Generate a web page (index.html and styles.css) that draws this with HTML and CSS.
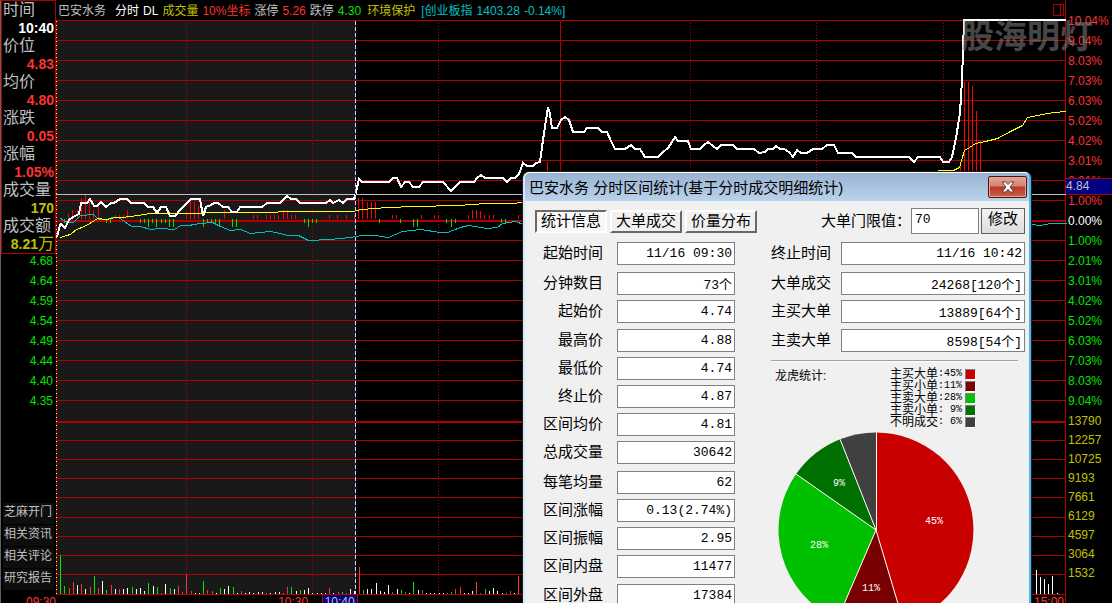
FILE: index.html
```html
<!DOCTYPE html>
<html lang="zh-CN">
<head>
<meta charset="utf-8">
<title>巴安水务 分时</title>
<link rel="stylesheet" href="styles.css">
</head>
<body>
<main class="terminal">
  <aside class="side">
    <dl class="quote">
      <dt>时间</dt><dd class="white">10:40</dd>
      <dt>价位</dt><dd class="up">4.83</dd>
      <dt>均价</dt><dd class="up">4.80</dd>
      <dt>涨跌</dt><dd class="up">0.05</dd>
      <dt>涨幅</dt><dd class="up">1.05%</dd>
      <dt>成交量</dt><dd class="amount">170</dd>
      <dt>成交额</dt><dd class="amount">8.21<span class="unit">万</span></dd>
    </dl>
    <ul class="scale prices down">
      <li>4.68</li><li>4.64</li><li>4.59</li><li>4.54</li><li>4.49</li><li>4.44</li><li>4.40</li><li>4.35</li>
    </ul>
    <nav class="links">
      <button type="button">芝麻开门</button>
      <button type="button">相关资讯</button>
      <button type="button">相关评论</button>
      <button type="button">研究报告</button>
    </nav>
  </aside>

  <section class="chart">
    <header class="head">
      <span class="name">巴安水务</span>
      <span class="white">分时</span>
      <span class="white">DL</span>
      <span class="amount">成交量</span>
      <span class="up">10%坐标</span>
      <span>涨停</span>
      <span class="up">5.26</span>
      <span>跌停</span>
      <span class="down">4.30</span>
      <span class="amount sector">环境保护</span>
      <span class="index sector">[创业板指</span>
      <span class="index">1403.28</span>
      <span class="index">-0.14%]</span>
      <svg class="pane-icon" width="11" height="12" viewBox="0 0 11 12" aria-hidden="true"><path d="M.5.5h10v11H.5zM7.5.5v11"/></svg>
    </header>
    <svg class="plot" viewBox="56 20 1010 583" preserveAspectRatio="none" role="img" aria-label="分时走势图">
      <rect class="selection" x="57" y="20" width="298" height="574"/>
      <g id="grid" class="grid"></g>
      <path class="grid-dots" d="M186.5 23V594M312.5 23V594M438.5 23V594M690.5 23V594M816.5 23V594M943.5 23V594"/>
      <path class="grid" d="M56.5 20V594M560.5 20V594M1065.5 0V603"/>
      <path class="grid zero" d="M56 221H1066M56 422H1066"/>
      <path class="edge-dots" d="M56.5 21V594"/>
      <g id="bars" class="bars"></g>
      <path class="cross" d="M56 194.5H1066"/>
      <g class="thin" transform="translate(.5 .5)">
        <polyline class="index-line" points="60,218 67,222 73,222 80,215 93,214 98,219 106,219 112,217 118,217 124,221 131,226 140,226 150,229 160,228 174,229 180,225 188,225 200,223 212,222 220,226 230,230 240,229 250,233 270,231 280,233 287,235 298,235 308,240 330,239 350,237 362,235 375,235 388,237 402,231 420,229 440,232 447,232 460,227 468,225 480,227 487,228 497,227 502,223 515,221 523,224 1031,224 1040,225 1050,223 1066,223"/>
        <polyline class="avg-line" points="60,237 66,235 70,234 76,229 84,226 91,222 97,218 106,219 115,217 122,217 138,215 150,213 200,213 206,212 275,212 280,211 354,211 360,209 375,208 387,207 415,206 457,205 486,203 510,203 523,202"/>
        <polyline class="avg-line" points="937,170 953,170 959,167 964,150 969,147 975,143 985,141 997,138 1010,131 1022,125 1027,117 1042,114 1053,112 1066,111"/>
      </g>
      <polyline class="price-line" points="57,237 60,225 61,224 65,228 69,220 73,217 77,215 79,214 81,203 87,203 90,199 94,206 97,206 101,202 106,207 111,203 114,203 120,199 127,199 131,203 144,203 148,207 153,207 157,213 161,207 166,207 170,216 175,216 180,210 186,204 191,199 200,199 203,216 206,207 211,205 214,203 218,203 223,207 228,207 232,212 237,212 240,207 262,207 267,203 280,203 287,196 291,199 296,199 300,203 326,203 330,200 333,203 339,200 343,203 347,199 354,199 356,192 359,179 362,182 389,182 393,178 397,178 401,187 405,182 409,182 413,187 419,187 423,182 443,182 451,191 460,182 474,182 477,178 481,175 485,178 503,178 507,182 511,178 515,178 519,174 523,163 527,166 533,166 536,163 540,162 543,140 546,120 548,107 550,114 552,128 557,128 561,120 565,117 569,120 573,132 584,132 587,128 598,128 602,132 607,132 611,141 615,149 625,149 631,145 635,149 640,149 645,157 658,157 663,152 668,148 672,142 675,137 678,141 688,141 691,149 700,149 704,145 708,142 713,146 717,149 721,145 733,145 737,149 754,149 759,153 765,152 768,149 773,149 776,146 780,149 784,149 789,152 793,157 797,150 801,153 807,153 813,149 822,149 827,145 834,145 838,153 852,153 856,157 909,157 914,162 918,157 940,157 943,162 949,162 952,157 956,138 960,113 962,80 964,20 1066,20"/>
      <path class="cursor-base" d="M355.5 21V594"/>
      <path class="cursor" d="M355.5 21V594"/>
    </svg>
    <div class="watermark">股海明灯</div>
    <span class="time t0930">09:30</span>
    <span class="time t1030">10:30</span>
    <span class="time now">10:40</span>
    <span class="time t1500">15:00</span>
  </section>

  <aside class="axis">
    <ul class="scale up">
      <li>10.04%</li><li>9.04%</li><li>8.03%</li><li>7.03%</li><li>6.03%</li><li>5.02%</li><li>4.02%</li><li>3.01%</li><li>2.01%</li><li>1.00%</li>
    </ul>
    <ul class="scale white"><li>0.00%</li></ul>
    <ul class="scale down">
      <li>1.00%</li><li>2.01%</li><li>3.01%</li><li>4.02%</li><li>5.02%</li><li>6.03%</li><li>7.03%</li><li>8.03%</li><li>9.04%</li>
    </ul>
    <ul class="scale volume amount">
      <li>13790</li><li>12257</li><li>10725</li><li>9193</li><li>7661</li><li>6129</li><li>4597</li><li>3064</li><li>1532</li>
    </ul>
    <div class="tag">4.84</div>
  </aside>
</main>

<section class="dialog" role="dialog" aria-labelledby="dialog-title">
  <header class="titlebar">
    <h1 id="dialog-title">巴安水务 分时区间统计(基于分时成交明细统计)</h1>
    <button class="close" type="button" aria-label="关闭">
      <svg width="14" height="12" viewBox="0 0 14 12"><path d="M1 1h3.6L7 3.6 9.400 1H13L9 6l4 5H9.400L7 8.400 4.600 11H1l4-5z"/></svg>
    </button>
  </header>
  <div class="body">
    <div class="toolbar">
      <button class="tab active" type="button">统计信息</button>
      <button class="tab" type="button">大单成交</button>
      <button class="tab" type="button">价量分布</button>
      <label class="limit-label" for="limit">大单门限值：</label>
      <input class="limit" id="limit" type="text" value="70">
      <button class="modify" type="button">修改</button>
    </div>
    <div class="columns">
      <div class="fields">
        <label for="a1">起始时间</label><input id="a1" value="11/16 09:30" readonly>
        <label for="a2">分钟数目</label><input id="a2" value="73个" readonly>
        <label for="a3">起始价</label><input id="a3" value="4.74" readonly>
        <label for="a4">最高价</label><input id="a4" value="4.88" readonly>
        <label for="a5">最低价</label><input id="a5" value="4.74" readonly>
        <label for="a6">终止价</label><input id="a6" value="4.87" readonly>
        <label for="a7">区间均价</label><input id="a7" value="4.81" readonly>
        <label for="a8">总成交量</label><input id="a8" value="30642" readonly>
        <label for="a9">每笔均量</label><input id="a9" value="62" readonly>
        <label for="a10">区间涨幅</label><input id="a10" value="0.13(2.74%)" readonly>
        <label for="a11">区间振幅</label><input id="a11" value="2.95" readonly>
        <label for="a12">区间内盘</label><input id="a12" value="11477" readonly>
        <label for="a13">区间外盘</label><input id="a13" value="17384" readonly>
      </div>
      <div class="right">
        <div class="fields wide">
          <label for="b1">终止时间</label><input id="b1" value="11/16 10:42" readonly>
          <label for="b2">大单成交</label><input id="b2" value="24268[120个]" readonly>
          <label for="b3">主买大单</label><input id="b3" value="13889[64个]" readonly>
          <label for="b4">主卖大单</label><input id="b4" value="8598[54个]" readonly>
        </div>
        <hr class="rule">
        <div class="stats">
          <h2>龙虎统计:</h2>
          <ul class="legend">
            <li>主买大单<span class="num">:45%</span><i class="swatch red"></i></li>
            <li>主买小单<span class="num">:11%</span><i class="swatch maroon"></i></li>
            <li>主卖大单<span class="num">:28%</span><i class="swatch lime"></i></li>
            <li>主卖小单<span class="num">: 9%</span><i class="swatch green"></i></li>
            <li>不明成交<span class="num">: 6%</span><i class="swatch gray"></i></li>
          </ul>
        </div>
        <svg class="pie" width="196" height="196" viewBox="0 0 196 196" role="img" aria-label="龙虎统计">
          <path fill="#c80000" d="M98 98V.5A97.500 97.500 0 0 1 125.900 191.400z"/>
          <path fill="#780000" d="M98 98L125.900 191.400A97.500 97.500 0 0 1 59.400 187.500z"/>
          <path fill="#00c000" d="M98 98L59.400 187.500A97.500 97.500 0 0 1 18.100 42.100z"/>
          <path fill="#007000" d="M98 98L18.100 42.100A97.500 97.500 0 0 1 62.100 7.300z"/>
          <path fill="#404040" d="M98 98L62.100 7.300A97.500 97.500 0 0 1 98 .5z"/>
          <path class="spokes" d="M98.500 98V0M98 98L125.900 191.400M98 98L59.400 187.500M98 98L18.100 42.100M98 98L62.100 7.300"/>
          <text x="156" y="92">45%</text>
          <text x="93" y="159">11%</text>
          <text x="41" y="116">28%</text>
          <text x="61" y="54">9%</text>
        </svg>
      </div>
    </div>
  </div>
</section>
<script src="chart.js"></script>
</body>
</html>
```

FILE: styles.css
```css
* { box-sizing: border-box; }

body {
  margin: 0;
  height: 100vh;
  overflow: hidden;
  position: relative;
  background: #000;
  color: #c0c0c0;
  font: 12px/20px "Liberation Sans", "Noto Sans CJK SC", sans-serif;
}

ul, dl, dd, h1, h2 { margin: 0; padding: 0; font-weight: normal; }
ul { list-style: none; }
button, input { font-family: inherit; margin: 0; }

.up { color: #ff3232; }
.down { color: #00e600; }
.white { color: #fff; }
.amount { color: #c0c000; }
.index { color: #00c0c0; }

.terminal {
  display: grid;
  grid-template-columns: 56px 1fr 46px;
  height: 100%;
}

/* left column */
.side {
  border-left: 1px solid #606060;
  display: flex;
  flex-direction: column;
}
.quote {
  border: 1px solid #b00000;
  line-height: 18px;
}
.quote dt { font-size: 16px; padding-left: 1px; white-space: nowrap; }
.quote dd { font-size: 14px; font-weight: bold; text-align: right; padding-right: 1px; white-space: nowrap; height: 18px; }
.quote .unit { font-size: 16px; font-weight: normal; line-height: 16px; }
.prices { margin-top: -3px; text-align: right; padding-right: 3px; }
.links {
  display: flex;
  flex-direction: column;
  gap: 1px;
  margin-top: 92px;
  padding: 0 2px;
}
.links button {
  height: 21px;
  padding: 0 0 4px 1px;
  border: 0;
  background: #0e0e0e;
  color: #c0c0c0;
  font-size: 12px;
  line-height: 16px;
  text-align: left;
  white-space: nowrap;
}

/* chart */
.chart { position: relative; display: flex; flex-direction: column; min-width: 0; }
.head {
  display: flex;
  gap: 4px;
  height: 20px;
  padding: 0 2px;
  line-height: 22px;
  white-space: nowrap;
}
.head .name { margin-right: 5px; }
.head .sector { margin-left: 2px; }
.pane-icon { margin: 4px 0 0 auto; fill: none; stroke: #b00000; }
.plot { display: block; width: 100%; height: 583px; overflow: visible; shape-rendering: crispEdges; fill: none; }
.selection { fill: #191919; }
.grid { stroke: #b00000; }
.zero { stroke-width: 2; }
.grid-dots { stroke: #b00000; stroke-dasharray: 1 2; }
.edge-dots { stroke: #ffff32; stroke-dasharray: 1 3; }
.cross { stroke: #c0c0c0; }
.cursor-base { stroke: #2020a0; }
.cursor { stroke: #d8d8d8; stroke-dasharray: 4 2; }
.price-line { stroke: #fff; stroke-width: 2; }
.avg-line { stroke: #ffff00; }
.index-line { stroke: #00c0c0; }
.bars { shape-rendering: auto; }
.bar-up { stroke: #ff0000; }
.bar-down { stroke: #00e600; }
.bar-red { stroke: #ff3232; }
.bar-white { stroke: #fff; }

.watermark {
  position: absolute;
  z-index: 1;
  top: 13px;
  right: -27px;
  color: #808080;
  opacity: .55;
  font-size: 33px;
  font-weight: bold;
  line-height: 48px;
  white-space: nowrap;
}
.time {
  position: absolute;
  top: 595px;
  color: #ff3232;
  line-height: 14px;
}
.t0930 { right: 100%; }
.t1030 { left: 22%; }
.now {
  left: 26.300%;
  padding: 0 2px;
  border: 1px solid #b00000;
  border-top: 0;
  background: #000080;
  color: #c0c0c0;
}
.t1500 { right: 2px; }

/* right axis */
.axis { position: relative; padding: 11px 0 0 2px; }
.volume { line-height: 19px; margin-top: 1px; }
.tag {
  position: absolute;
  top: 178px;
  left: 0;
  right: 0;
  height: 17px;
  border: 1px solid #b00000;
  border-width: 1px 0;
  background: #000080;
  line-height: 15px;
}

/* dialog window */
.dialog {
  position: absolute;
  z-index: 2;
  left: 523px;
  top: 172px;
  width: 508px;
  border: 2px solid #b9d1ea;
  border-top: 1px solid #fff;
  border-left-color: #d5e6f7;
  border-right-color: #48b8e8;
  border-radius: 6px 6px 0 0;
  box-shadow: 0 0 0 1px #202020;
  background: #f0f0f0;
  color: #000;
  font-size: 15px;
}
.titlebar {
  display: flex;
  align-items: flex-start;
  justify-content: space-between;
  height: 28px;
  padding: 3px 2px 0 4px;
  border-radius: 5px 5px 0 0;
  background: linear-gradient(#98b3d1, #bad2eb);
}
.titlebar h1 { font-size: 15px; line-height: 24px; white-space: nowrap; }
.close {
  display: grid;
  place-items: center;
  width: 39px;
  height: 22px;
  padding: 0;
  border: 1px solid #4c1410;
  border-radius: 2px;
  background: linear-gradient(#e8a698 0, #d5816f 45%, #b93a20 50%, #c9604c 100%);
  box-shadow: inset 0 0 0 1px #e0a79c;
}
.close svg { fill: #fff; stroke: #5b4340; stroke-width: 1; }

.body { padding: 6px 4px 12px 10px; }
.toolbar { display: flex; align-items: center; height: 28px; }
.tab {
  width: 72px;
  height: 23px;
  margin-right: 3px;
  padding: 0;
  border: 2px solid;
  border-color: #fff #696969 #696969 #fff;
  background: #f0f0f0;
  color: #000;
  font-size: 15px;
  line-height: 18px;
  white-space: nowrap;
}
.tab.active {
  border-color: #696969 #fff #fff #696969;
  background: repeating-conic-gradient(#fff 0 25%, #f0f0f0 0 50%) 0 0 / 2px 2px;
}
.limit-label { margin-left: auto; white-space: nowrap; }
input {
  border: 1px solid #808080;
  border-radius: 0;
  background: #fff;
  color: #000;
  font: 13px "Liberation Mono", "Noto Sans CJK SC", monospace;
}
.limit { width: 68px; height: 26px; padding: 0 3px 4px; }
.modify {
  width: 44px;
  height: 26px;
  margin-left: 2px;
  padding: 0 0 4px;
  border: 1px solid #606060;
  background: linear-gradient(#f4f4f4, #dcdcdc);
  color: #000;
  font-size: 15px;
  line-height: 20px;
}
.columns { display: flex; gap: 36px; margin-top: 7px; }
.fields {
  display: grid;
  grid-template-columns: 68px 118px;
  column-gap: 14px;
  grid-template-rows: 30px 28px 29px 28px 28px 28px 28px 30px 28px 28px 28px 29px 28px;
}
.fields label { text-align: right; line-height: 22px; white-space: nowrap; }
.fields input { width: 100%; height: 23px; padding: 0 2px; text-align: right; }
.right { flex: 1; }
.fields.wide {
  grid-template-columns: 60px 1fr;
  column-gap: 10px;
  grid-template-rows: 30px 28px 29px 31px;
}
.rule {
  height: 2px;
  margin: 0 7px 0 0;
  border: 0;
  border-top: 1px solid #a0a0a0;
  border-bottom: 1px solid #fff;
}
.stats {
  display: flex;
  justify-content: space-between;
  padding: 6px 49px 0 4px;
  font-size: 12px;
}
.stats h2 { font-size: 12px; line-height: 16px; }
.legend li {
  display: flex;
  align-items: center;
  height: 12px;
  line-height: 12px;
  white-space: nowrap;
}
.num { font: 10px/12px "Liberation Mono", monospace; white-space: pre; }
.swatch {
  width: 11px;
  height: 11px;
  margin-left: 3px;
  border: 1px solid;
  border-color: #808080 #fff #fff #808080;
}
.red { background: #c80000; }
.maroon { background: #780000; }
.lime { background: #00c000; }
.green { background: #007000; }
.gray { background: #404040; }
.pie { display: block; margin: 4px 0 0 7px; }
.spokes { stroke: #fff; fill: none; }
.pie text { fill: #fff; font: 10px "Liberation Mono", monospace; text-anchor: middle; }
```

FILE: chart.js
```js
const NS = "http://www.w3.org/2000/svg";

function addPath(parent, cls, d) {
  const path = document.createElementNS(NS, "path");
  path.setAttribute("d", d);
  if (cls) path.setAttribute("class", cls);
  parent.appendChild(path);
}

const grid = document.getElementById("grid");
const rows = [];
for (let y = 20; y <= 400; y += 20) if (y !== 220) rows.push(y);
rows.push(440, 459, 478, 497, 517, 536, 555, 574, 594);
addPath(grid, "", rows.map(y => `M56 ${y}.5H1066`).join(""));

// Each entry is "x:y"; the bar runs from y to the base line.
function bars(cls, base, list) {
  const d = list.trim().split(/\s+/).map(item => {
    const [x, y] = item.split(":");
    return `M${x}.5 ${y}V${base}`;
  }).join("");
  addPath(document.getElementById("bars"), cls, d);
}

bars("bar-up", 219, `68:214 72:210 77:210 81:198 85:195 89:198 93:210 98:206 115:215 119:215 123:215
  127:210 186:214 190:202 194:202 198:206 224:210 253:215 257:215 266:215 270:215 274:215 278:215
  283:210 287:210 291:215 295:215 329:215 337:215 346:215 354:215 358:198 362:198 367:202 371:202
  375:202 392:215 396:215 421:215 434:215 438:215 468:215 472:210 476:210 480:211 484:215 489:215
  493:215 518:215`);
bars("bar-down", 219, `64:223 106:223 110:223 140:223 144:223 148:227 152:223 156:227 161:223 165:223
  169:227 173:227 203:227 207:223 211:223 215:223 219:227 232:227 236:227 304:223 308:227 312:223
  316:223 379:223 400:223 413:227 417:227 446:223 451:227 455:223 501:223 505:223`);
bars("bar-up", 172, "547:162 960:166 964:82 968:82 972:86 976:111 980:140");

bars("bar-down", 594, `60:555 64:586 94:576 106:590 132:587 148:583 157:587 170:588 203:581 220:588
  233:587 291:587 300:590 342:592 363:590 401:590 413:582 451:592 485:589 506:593`);
bars("bar-red", 594, `69:588 73:582 81:584 90:587 98:588 111:585 119:589 161:593 178:586 182:592
  186:574 191:591 207:590 212:591 241:591 266:593 283:593 287:587 329:588 338:592 346:593 359:567
  392:592 405:592 422:590 447:593 455:589 460:587 476:582 480:593 510:591 518:576`);
bars("bar-white", 594, `77:585 85:589 102:581 115:589 123:589 127:588 136:589 140:588 144:591 153:586
  165:584 174:589 195:593 199:593 216:593 224:589 228:586 237:593 245:593 249:592 253:593 258:592
  262:592 270:593 275:592 279:592 296:591 304:590 308:588 312:593 317:593 321:593 325:593 333:593
  350:589 354:591 367:589 371:589 376:583 380:591 384:592 388:585 397:589 409:593 418:590 426:593
  430:593 434:593 439:593 443:593 464:593 468:593 472:591 489:591 493:588 497:591 502:593 514:593
  1036:570 1040:577 1044:579 1048:584 1052:576 1057:593`);
```
